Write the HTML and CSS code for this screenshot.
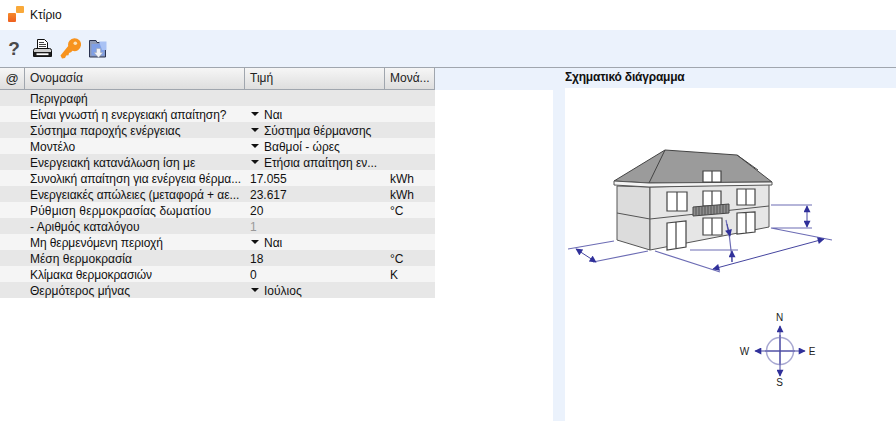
FILE: index.html
```html
<!DOCTYPE html>
<html lang="el">
<head>
<meta charset="utf-8">
<title>Κτίριο</title>
<link rel="stylesheet" href="styles.css">
</head>
<body>
<div class="titlebar">
  <svg class="logo" width="16" height="16" viewBox="0 0 16 16"><defs><linearGradient id="lg" x1="0" y1="0" x2="0" y2="1"><stop offset="0" stop-color="#f58a2a"/><stop offset="1" stop-color="#ee5f1f"/></linearGradient></defs><rect x="0" y="7" width="8" height="9" rx="1" fill="url(#lg)"/><rect x="8" y="0" width="8" height="7" rx="1" fill="#f9a93a"/></svg>
  <span>Κτίριο</span>
</div>
<div class="toolbar">
  <span class="help">?</span>
  <svg class="tool" width="19" height="19" viewBox="0 0 19 19"><path d="M4.500.5h7l3 3v7h-10z" fill="#fff" stroke="#111"/><path d="M6 3.500h5M6 5.500h7M6 7.500h7" stroke="#444"/><path d="M.5 11.500q0-2 2-2h14q2 0 2 2v6H.5z" fill="#cfcfcf" stroke="#111"/><rect x="1" y="13" width="17" height="4.500" fill="#1c1c1c"/><rect x="3.500" y="14.300" width="12" height="1.800" fill="#fff"/></svg>
  <svg class="tool" width="21" height="21" viewBox="0 0 21 21"><path d="M.5 17.500l1.500 3 3-.5 1.200-2.500 2.300-.3.500-2.200 2-.7 1.500-1.500a6.500 6.500 0 1 0-4.300-4.800z" fill="#f7931e"/><circle cx="15.300" cy="5.300" r="1.800" fill="#fce3b8"/></svg>
  <svg class="tool" width="19" height="19" viewBox="0 0 19 19"><path d="M.5 18V1.500h6.500l1 2h8.500v14.500z" fill="#8f9bb8" stroke="#2a3350"/><rect x="2.500" y="5" width="13" height="11.500" fill="#7f9fe6"/><path d="M10 2.500h7.500V11H13z" fill="#a9c2f4"/><path d="M7.500 9.500h4v4H14l-4.500 5-4.500-5h2.500z" fill="#f2f3f6" stroke="#9aa0ad" stroke-width=".5"/></svg>
</div>
<div class="content">
  <section class="table-pane">
    <div class="row head">
      <div class="at">@</div><div class="cell name">Ονομασία</div><div class="cell val">Τιμή</div><div class="cell unit">Μονά...</div>
    </div>
    <div class="row"><div></div><div class="cell name">Περιγραφή</div><div class="cell val"></div><div class="cell"></div></div>
    <div class="row"><div></div><div class="cell name tight">Είναι γνωστή η ενεργειακή απαίτηση?</div><div class="cell val"><i class="caret"></i>Ναι</div><div class="cell"></div></div>
    <div class="row"><div></div><div class="cell name">Σύστημα παροχής ενέργειας</div><div class="cell val slim"><i class="caret"></i>Σύστημα θέρμανσης</div><div class="cell"></div></div>
    <div class="row"><div></div><div class="cell name">Μοντέλο</div><div class="cell val"><i class="caret"></i>Βαθμοί - ώρες</div><div class="cell"></div></div>
    <div class="row"><div></div><div class="cell name">Ενεργειακή κατανάλωση ίση με</div><div class="cell val slim"><i class="caret"></i>Ετήσια απαίτηση εν...</div><div class="cell"></div></div>
    <div class="row"><div></div><div class="cell name slim">Συνολική απαίτηση για ενέργεια θέρμα...</div><div class="cell val">17.055</div><div class="cell unit">kWh</div></div>
    <div class="row"><div></div><div class="cell name slim">Ενεργειακές απώλειες (μεταφορά + αε...</div><div class="cell val">23.617</div><div class="cell unit">kWh</div></div>
    <div class="row"><div></div><div class="cell name wide">Ρύθμιση θερμοκρασίας δωματίου</div><div class="cell val">20</div><div class="cell unit">°C</div></div>
    <div class="row"><div></div><div class="cell name">- Αριθμός καταλόγου</div><div class="cell val muted">1</div><div class="cell"></div></div>
    <div class="row"><div></div><div class="cell name slim">Μη θερμενόμενη περιοχή</div><div class="cell val"><i class="caret"></i>Ναι</div><div class="cell"></div></div>
    <div class="row"><div></div><div class="cell name">Μέση θερμοκρασία</div><div class="cell val">18</div><div class="cell unit">°C</div></div>
    <div class="row"><div></div><div class="cell name tight">Κλίμακα θερμοκρασιών</div><div class="cell val">0</div><div class="cell unit">K</div></div>
    <div class="row"><div></div><div class="cell name">Θερμότερος μήνας</div><div class="cell val"><i class="caret"></i>Ιούλιος</div><div class="cell"></div></div>
  </section>
  <section class="diagram-pane">
    <h2>Σχηματικό διάγραμμα</h2>
    <div class="diagram">
      <svg width="331" height="333" viewBox="565 88 331 333">
        <defs>
          <marker id="a" viewBox="0 0 10 10" refX="9" refY="5" markerWidth="9" markerHeight="7" orient="auto-start-reverse" markerUnits="userSpaceOnUse"><path d="M0 0L10 5L0 10z" fill="#30309a"/></marker>
        </defs>
        <path d="M614 181L665 150L737 155L772 182L649 183z" fill="#9b9b9b" stroke="#444" stroke-width="1"/>
        <path d="M665 150L649 183M737 155L758 170" fill="none" stroke="#444"/>
        <path d="M617 186L650 187L650 250L617 240z" fill="#dcdcdc" stroke="#555"/>
        <path d="M650 187L769 184V227L650 250z" fill="#e6e6e6" stroke="#555"/>
        <path d="M614 181L649 183L772 182V185L649 187L614 185z" fill="#f4f4f4" stroke="#555"/>
        <path d="M617 213L650 219L769 206" fill="none" stroke="#555"/>
        <g fill="#fff" stroke="#444" stroke-width="1.200">
          <path d="M703 171H721V182H703zM712 171V182"/>
          <path d="M667 192H687V211H667zM677 192V211"/>
          <path d="M703 191H721V206H703zM712 191V206"/>
          <path d="M737 189H755V205H737zM746 189V205"/>
          <path d="M703 218H722V235H703zM712 218V235"/>
          <path d="M667 223L686 221V247L667 250zM676 222V248"/>
          <path d="M737 213L755 212V232L737 234zM746 213V233"/>
        </g>
        <path d="M693 207L729 204V213L693 216z" fill="#8e8e8e" stroke="#444"/>
        <path d="M696 207V215M699 207V215M702 206V215M705 206V215M708 206V214M711 205V214M714 205V214M717 205V214M720 205V213M723 205V213M726 204V213" stroke="#555" stroke-width="1"/>
        <g fill="none" stroke="#6c6cb4" stroke-width="1.200">
          <path d="M568 249L614 241M593 262L648 251M655 251L720 272M690 250H738M771 228L832 240M771 205H812M771 228H812"/>
          <path d="M726 220Q731 240 732 262"/>
          <path d="M780 335V365M765 351H795"/>
          <circle cx="780" cy="351" r="13.500" stroke="#a9a9d2" stroke-width="1.500"/>
        </g>
        <g fill="none" stroke="#45459f" stroke-width="1">
          <path d="M576 249L596 262" marker-start="url(#a)" marker-end="url(#a)"/>
          <path d="M713 269L824 239" marker-start="url(#a)" marker-end="url(#a)"/>
          <path d="M807 206V227" marker-start="url(#a)" marker-end="url(#a)"/>
          <path d="M727 224L730 236" marker-end="url(#a)"/>
          <path d="M732 262V251" marker-end="url(#a)"/>
          <path d="M780 351V326" marker-end="url(#a)"/>
          <path d="M780 351V376" marker-end="url(#a)"/>
          <path d="M780 351H755" marker-end="url(#a)"/>
          <path d="M780 351H805" marker-end="url(#a)"/>
        </g>
        <g class="dir">
          <text x="779.500" y="320.500">N</text>
          <text x="779.500" y="386">S</text>
          <text x="744.500" y="354.500">W</text>
          <text x="812" y="354.500">E</text>
        </g>
      </svg>
    </div>
  </section>
</div>
</body>
</html>
```

FILE: styles.css
```css
* { box-sizing: border-box; }
html, body { margin: 0; padding: 0; height: 100%; }
body {
  width: 896px;
  height: 421px;
  overflow: hidden;
  display: flex;
  flex-direction: column;
  background: #ebf2fc;
  color: #111;
  font: 12px "Liberation Sans", Arial, sans-serif;
}
.titlebar {
  height: 30px;
  flex: none;
  background: #fff;
  display: flex;
  align-items: center;
  gap: 6px;
  padding: 0 0 0 8px;
  font-size: 12px;
}
.logo { margin-top: -2px; }
.toolbar {
  height: 38px;
  flex: none;
  display: flex;
  align-items: center;
  gap: 8px;
  padding-left: 8px;
  border-bottom: 1px solid #a0a6ae;
}
.help {
  width: 12px;
  margin-right: 5px;
  font-size: 19px;
  font-weight: bold;
  color: #4a4a4a;
  text-align: center;
}
.tool { flex: none; }
.content {
  flex: 1;
  display: flex;
  min-height: 0;
}
.table-pane {
  width: 553px;
  flex: none;
  background: linear-gradient(#ebf2fc 22px, #fff 22px);
}
.row {
  width: 435px;
  height: 16px;
  display: grid;
  grid-template-columns: 25px 220px 140px 50px;
  align-items: center;
  line-height: 16px;
  padding-top: 1px;
}
.row:nth-child(even) { background: #e7e7e7; }
.row:nth-child(odd) { background: #f5f5f5; }
.row.head {
  height: 22px;
  padding-top: 0;
  background: linear-gradient(#f6f6f6, #dedede);
  border-bottom: 1px solid #a0a6ae;
  align-items: stretch;
  line-height: 21px;
  color: #222;
}
.head > div { border-right: 1px solid #a0a6ae; }
.at { text-align: center; font-size: 13px; }
.cell { padding-left: 5px; white-space: nowrap; overflow: hidden; }
.muted { color: #999; }
.tight { letter-spacing: -.12px; }
.slim { letter-spacing: -.08px; }
.wide { letter-spacing: .14px; }
.caret {
  display: inline-block;
  width: 0;
  height: 0;
  margin: 0 5px 2px 1px;
  vertical-align: middle;
  border-left: 4px solid transparent;
  border-right: 4px solid transparent;
  border-top: 4px solid #111;
}
.diagram-pane {
  flex: 1;
  min-width: 0;
  padding-left: 12px;
  display: flex;
  flex-direction: column;
}
h2 {
  margin: 0;
  height: 20px;
  line-height: 19px;
  font-size: 12px;
  font-weight: bold;
  letter-spacing: -.2px;
  flex: none;
}
.diagram { flex: 1; background: #fff; min-height: 0; }
.diagram svg { display: block; }
.dir { font: 10px "Liberation Sans", Arial, sans-serif; fill: #222; text-anchor: middle; }
```
